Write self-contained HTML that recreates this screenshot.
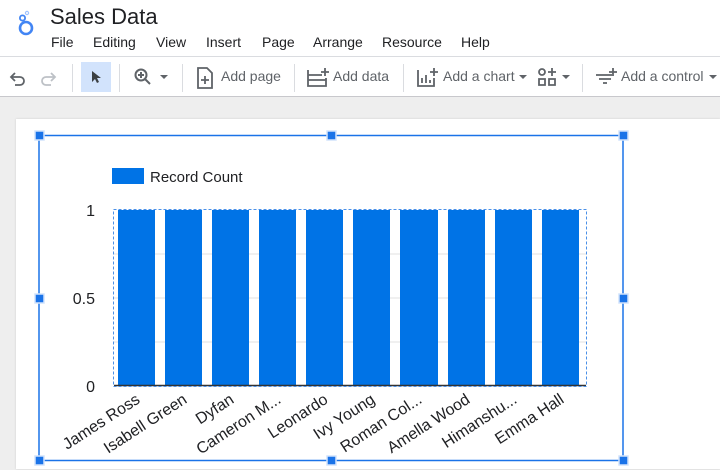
<!DOCTYPE html>
<html><head><style>
body{margin:0;width:720px;height:469px;overflow:hidden;background:#fff;font-family:"Liberation Sans",Arial,sans-serif;position:relative}
.t{position:absolute;white-space:nowrap}
.menu span{position:absolute;top:34px;font-size:14px;color:#202124}
.tb{position:absolute;top:68px;font-size:14px;color:#5f6368}
.sep{position:absolute;top:64px;width:1px;height:28px;background:#dadce0}
</style></head><body>
<svg style="position:absolute;left:15px;top:10px" width="22" height="28" viewBox="0 0 22 28">
<circle cx="11" cy="18" r="6" fill="none" stroke="#4285f4" stroke-width="2.6"/>
<circle cx="7.5" cy="8" r="2.6" fill="none" stroke="#4285f4" stroke-width="1.8"/>
<circle cx="12" cy="3" r="1.6" fill="none" stroke="#a0c3ff" stroke-width="1.2"/>
</svg>
<div class="t" style="left:50px;top:4px;font-size:22px;color:#202124">Sales Data</div>
<div class="menu"><span style="left:51px">File</span><span style="left:93px">Editing</span><span style="left:156px">View</span><span style="left:206px">Insert</span><span style="left:262px">Page</span><span style="left:313px">Arrange</span><span style="left:382px">Resource</span><span style="left:461px">Help</span></div>
<div style="position:absolute;left:0;top:56px;width:720px;height:1px;background:#dadce0"></div>
<svg style="position:absolute;left:8px;top:68px" width="20" height="20" viewBox="0 0 20 20"><path d="M4 9h8a4 4 0 0 1 0 8H7M7 5L3 9l4 4" fill="none" stroke="#5f6368" stroke-width="1.8"/></svg>
<svg style="position:absolute;left:38px;top:68px" width="20" height="20" viewBox="0 0 20 20"><path d="M16 9H8a4 4 0 0 0 0 8h5M13 5l4 4-4 4" fill="none" stroke="#bdc1c6" stroke-width="1.8"/></svg>
<div class="sep" style="left:72px"></div>
<div style="position:absolute;left:81px;top:62px;width:30px;height:30px;background:#d2e3fc"></div>
<svg style="position:absolute;left:88px;top:69px" width="16" height="16" viewBox="0 0 16 16"><path d="M4 2v11l3-3 2 4 2-1-2-4h4z" fill="#3c4043"/></svg>
<div class="sep" style="left:119px"></div>
<svg style="position:absolute;left:133px;top:67px" width="20" height="20" viewBox="0 0 20 20"><circle cx="8" cy="8" r="5.5" fill="none" stroke="#5f6368" stroke-width="2"/><path d="M12 12l5 5M8 5v6M5 8h6" stroke="#5f6368" stroke-width="2"/></svg>
<svg style="position:absolute;left:159px;top:74px" width="10" height="6"><path d="M1 1h8L5 5z" fill="#5f6368"/></svg>
<div class="sep" style="left:182px"></div>
<svg style="position:absolute;left:195px;top:66px" width="20" height="24" viewBox="0 0 20 24"><path d="M3 2h9l5 5v15H3z" fill="none" stroke="#5f6368" stroke-width="1.8"/><path d="M10 10v8M6 14h8" stroke="#5f6368" stroke-width="1.8"/></svg>
<div class="tb" style="left:221px">Add page</div>
<div class="sep" style="left:294px"></div>
<svg style="position:absolute;left:306px;top:66px" width="24" height="22" viewBox="0 0 24 22"><path d="M2 4v16h18V12M2 9h14M2 14h18M19 2v8M15 6h8" fill="none" stroke="#5f6368" stroke-width="1.8"/></svg>
<div class="tb" style="left:333px">Add data</div>
<div class="sep" style="left:403px"></div>
<svg style="position:absolute;left:416px;top:66px" width="24" height="22" viewBox="0 0 24 22"><path d="M2 4v16h16V12M6 17v-5M10 17v-8M14 17v-3M18 2v8M14 6h8" fill="none" stroke="#5f6368" stroke-width="1.8"/></svg>
<div class="tb" style="left:443px">Add a chart</div>
<svg style="position:absolute;left:518px;top:74px" width="10" height="6"><path d="M1 1h8L5 5z" fill="#5f6368"/></svg>
<svg style="position:absolute;left:537px;top:66px" width="24" height="22" viewBox="0 0 24 22"><circle cx="5" cy="6" r="3" fill="none" stroke="#5f6368" stroke-width="1.8"/><path d="M2 13h6v6H2zM12 13h6v6h-6zM15 2v8M11 6h8" fill="none" stroke="#5f6368" stroke-width="1.8"/></svg>
<svg style="position:absolute;left:561px;top:74px" width="10" height="6"><path d="M1 1h8L5 5z" fill="#5f6368"/></svg>
<div class="sep" style="left:582px"></div>
<svg style="position:absolute;left:595px;top:66px" width="24" height="22" viewBox="0 0 24 22"><path d="M1 9h16M4 13h12M8 17h4M18 2v8M14 6h8M1 9" fill="none" stroke="#5f6368" stroke-width="1.8"/></svg>
<div class="tb" style="left:621px">Add a control</div>
<svg style="position:absolute;left:708px;top:74px" width="10" height="6"><path d="M1 1h8L5 5z" fill="#5f6368"/></svg>
<div style="position:absolute;left:0;top:96px;width:720px;height:373px;background:#eeeeee;border-top:1px solid #c8c8cc"></div>
<div style="position:absolute;left:16px;top:119px;width:704px;height:350px;background:#fff;box-shadow:0 0 2px #ccc"></div>
<svg style="position:absolute;left:0;top:0" width="720" height="469" font-family="Liberation Sans, Arial, sans-serif">
<rect x="112" y="168" width="32" height="16" fill="#0073e6"/>
<text x="150" y="182" font-size="15" fill="#202124">Record Count</text>
<line x1="114" y1="254" x2="586" y2="254" stroke="#e0e0e0"/>
<line x1="114" y1="298" x2="586" y2="298" stroke="#e0e0e0"/>
<line x1="114" y1="342" x2="586" y2="342" stroke="#e0e0e0"/>
<g fill="#0073e6">
<rect x="118" y="210" width="37" height="176"/><rect x="165" y="210" width="37" height="176"/><rect x="212" y="210" width="37" height="176"/><rect x="259" y="210" width="37" height="176"/><rect x="306" y="210" width="37" height="176"/><rect x="353" y="210" width="37" height="176"/><rect x="400" y="210" width="38" height="176"/><rect x="448" y="210" width="37" height="176"/><rect x="495" y="210" width="37" height="176"/><rect x="542" y="210" width="37" height="176"/>
</g>
<line x1="114" y1="385.5" x2="586" y2="385.5" stroke="#333" stroke-width="1.5"/>
<rect x="113.5" y="209.5" width="473" height="177" fill="none" stroke="#4a90e8" stroke-dasharray="3 2"/>
<g font-size="16" fill="#202124" text-anchor="end">
<text x="95" y="216">1</text><text x="95" y="304">0.5</text><text x="95" y="392">0</text>
</g>
<g font-size="16" fill="#202124" text-anchor="end">
<text transform="translate(141,402) rotate(-33)">James Ross</text>
<text transform="translate(188,402) rotate(-33)">Isabell Green</text>
<text transform="translate(235,402) rotate(-33)">Dyfan</text>
<text transform="translate(282,402) rotate(-33)">Cameron M...</text>
<text transform="translate(329,402) rotate(-33)">Leonardo</text>
<text transform="translate(376,402) rotate(-33)">Ivy Young</text>
<text transform="translate(423,402) rotate(-33)">Roman Col...</text>
<text transform="translate(471,402) rotate(-33)">Amella Wood</text>
<text transform="translate(518,402) rotate(-33)">Himanshu...</text>
<text transform="translate(565,402) rotate(-33)">Emma Hall</text>
</g>
<rect x="39" y="135.5" width="584" height="325" fill="none" stroke="#1a73e8" stroke-width="1.5"/>
<g fill="#1a73e8" stroke="#d2e3fc" stroke-width="1.5">
<rect x="35" y="131" width="9" height="9"/><rect x="327" y="131" width="9" height="9"/><rect x="619" y="131" width="9" height="9"/>
<rect x="35" y="294" width="9" height="9"/><rect x="619" y="294" width="9" height="9"/>
<rect x="35" y="456" width="9" height="9"/><rect x="327" y="456" width="9" height="9"/><rect x="619" y="456" width="9" height="9"/>
</g>
</svg>
</body></html>
